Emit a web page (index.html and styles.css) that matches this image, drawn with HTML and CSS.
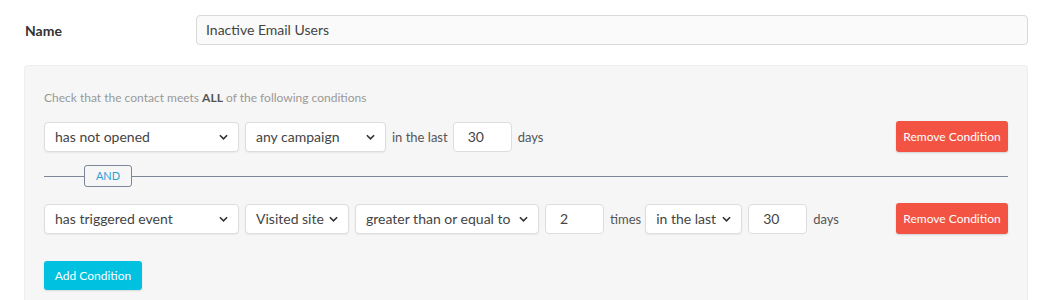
FILE: index.html
```html
<!DOCTYPE html>
<html lang="en">
<head>
  <meta charset="UTF-8">
  <title>Segment</title>
  <link rel="stylesheet" href="styles.css">
</head>
<body>
  <div class="page">
    <div class="name-row">
      <label class="name-label">Name</label>
      <div class="name-input">Inactive Email Users</div>
    </div>

    <div class="panel">
      <p class="help">Check that the contact meets <b>ALL</b> of the following conditions</p>

      <div class="cond-row">
        <div class="select w-first">has not opened <svg class="chev" viewBox="0 0 10 6"><path d="M1 1l4 4 4-4"/></svg></div>
        <div class="select w-campaign">any campaign <svg class="chev" viewBox="0 0 10 6"><path d="M1 1l4 4 4-4"/></svg></div>
        <span class="word">in the last</span>
        <div class="num">30</div>
        <span class="word">days</span>
        <button class="btn-remove">Remove Condition</button>
      </div>

      <div class="divider">
        <span class="line short"></span>
        <span class="and">AND</span>
        <span class="line"></span>
      </div>

      <div class="cond-row">
        <div class="select w-first">has triggered event <svg class="chev" viewBox="0 0 10 6"><path d="M1 1l4 4 4-4"/></svg></div>
        <div class="select w-site">Visited site <svg class="chev" viewBox="0 0 10 6"><path d="M1 1l4 4 4-4"/></svg></div>
        <div class="select w-op">greater than or equal to <svg class="chev" viewBox="0 0 10 6"><path d="M1 1l4 4 4-4"/></svg></div>
        <div class="num">2</div>
        <span class="word">times</span>
        <div class="select w-last">in the last <svg class="chev" viewBox="0 0 10 6"><path d="M1 1l4 4 4-4"/></svg></div>
        <div class="num">30</div>
        <span class="word">days</span>
        <button class="btn-remove">Remove Condition</button>
      </div>

      <button class="btn-add">Add Condition</button>
    </div>
  </div>
</body>
</html>
```

FILE: styles.css
```css
body {
  margin: 0;
  font-family: Lato, "Open Sans", Arial, sans-serif;
  color: #444;
  background: #fff;
}

.page {
  padding: 15px 22px 0 24px;
}

.name-row {
  display: flex;
  align-items: center;
}

.name-label {
  width: 171px;
  padding-left: 1px;
  font-size: 14px;
  font-weight: bold;
  color: #333;
}

.name-input {
  flex: 1;
  height: 28px;
  line-height: 28px;
  padding: 0 9px;
  font-size: 14px;
  color: #444;
  background: #fafafa;
  border: 1px solid #d9d9d9;
  border-radius: 4px;
}

.panel {
  margin-top: 20px;
  padding: 25px 19px 10px 19px;
  height: 210px;
  background: #f6f6f6;
  border: 1px solid #eee;
  border-bottom: none;
  border-radius: 4px 4px 0 0;
}

.help {
  margin: 0 0 16px;
  font-size: 12px;
  line-height: 14px;
  color: #999;
}

.help b {
  color: #555;
}

.cond-row {
  display: flex;
  align-items: center;
  gap: 6px;
  height: 31px;
}

.select {
  box-sizing: border-box;
  height: 30px;
  display: flex;
  align-items: center;
  justify-content: space-between;
  padding: 0 10px;
  font-size: 14px;
  color: #444;
  background: #fff;
  border: 1px solid #ddd;
  border-radius: 4px;
  box-shadow: 0 1px 2px rgba(0, 0, 0, 0.06);
}

.w-first { width: 195px; }
.w-campaign { width: 141px; }
.w-site { width: 104px; }
.w-op { width: 184px; }
.w-last { width: 97px; }

.chev {
  width: 9px;
  height: 6px;
  fill: none;
  stroke: #333;
  stroke-width: 1.8;
}

.num {
  box-sizing: border-box;
  width: 59px;
  height: 30px;
  line-height: 28px;
  padding-left: 14px;
  font-size: 14px;
  background: #fff;
  border: 1px solid #ddd;
  border-radius: 4px;
}

.word {
  font-size: 13px;
  color: #555;
}

.word + .num {
  margin-left: -1px;
}

.word + .select {
  margin-left: -2px;
}

.btn-remove {
  margin-left: auto;
  width: 112px;
  height: 31px;
  font-family: inherit;
  font-size: 12px;
  color: #fff;
  background: #f25343;
  border: none;
  border-radius: 3px;
  box-shadow: 0 1px 2px rgba(0, 0, 0, 0.15);
}

.divider {
  display: flex;
  align-items: center;
  margin: 13px 0 16px;
}

.line {
  flex: 1;
  border-top: 1px solid #7c8698;
}

.line.short {
  flex: none;
  width: 40px;
}

.and {
  box-sizing: border-box;
  width: 48px;
  height: 22px;
  line-height: 20px;
  text-align: center;
  font-size: 11px;
  color: #2a9fd6;
  border: 1px solid #7c8698;
  border-radius: 3px;
}

.btn-add {
  margin-top: 27px;
  width: 98px;
  height: 29px;
  font-family: inherit;
  font-size: 12px;
  color: #fff;
  background: #00c1e0;
  border: none;
  border-radius: 3px;
  box-shadow: 0 1px 2px rgba(0, 0, 0, 0.12);
}
```
